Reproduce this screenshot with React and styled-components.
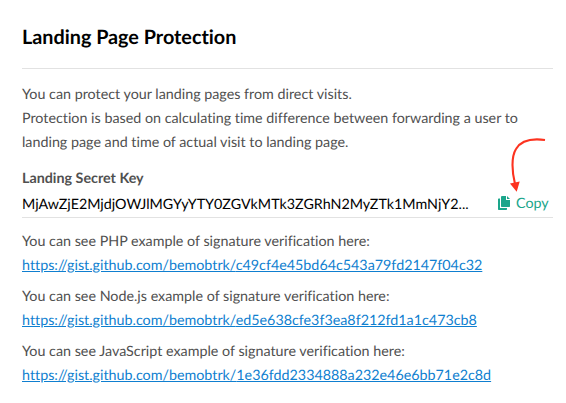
import React from 'react';
import styled, { createGlobalStyle } from 'styled-components';

const Global = createGlobalStyle`
  * { box-sizing: border-box; }
  body { margin: 0; background: #fff; font-family: Lato, "Liberation Sans", sans-serif; }
`;
const Panel = styled.main`
  width: 566px;
  height: 403px;
  padding: 22px 13px 0 22px;
  background: #fff;
  color: #505050;
  font-size: 14.3px;
  line-height: 24px;
  text-rendering: geometricPrecision;
  font-feature-settings: "liga" 0;
`;
const Title = styled.h1`
  margin: 0;
  height: 47px;
  border-bottom: 1px solid #e2e2e2;
  color: #000;
  font-size: 19.8px;
  font-weight: 700;
  line-height: 30px;
`;
const Intro = styled.p`
  margin: 14px 0 0;
  white-space: nowrap;
`;
const Label = styled.h2`
  margin: 12px 0 0;
  font-size: 14.3px;
  font-weight: 700;
  line-height: 24px;
`;
const KeyRow = styled.div`
  display: flex;
  justify-content: space-between;
  height: 27px;
  padding-right: 4px;
  border-bottom: 1px solid #e2e2e2;
`;
const Key = styled.span`
  color: #000;
  line-height: 28px;
  white-space: nowrap;
`;
const CopyButton = styled.button`
  position: relative;
  display: flex;
  align-items: flex-start;
  gap: 6px;
  width: 51px;
  height: 26px;
  padding: 0;
  border: 0;
  background: none;
  color: #1ba68b;
  font: inherit;
  line-height: 26px;
  text-rendering: inherit;
`;
const CopyIcon = styled.svg`
  flex: none;
  margin-top: 5px;
`;
const Arrow = styled.svg`
  position: absolute;
  left: 10px;
  top: -55px;
`;
const Example = styled.p`
  margin: ${(p) => (p.$first ? '12px' : '7px')} 0 0;
  white-space: nowrap;
`;
const Link = styled.a`
  display: block;
  width: max-content;
  color: #0f7fd0;
  text-decoration: underline;
`;

const examples = [
  ['PHP', 'c49cf4e45bd64c543a79fd2147f04c32'],
  ['Node.js', 'ed5e638cfe3f3ea8f212fd1a1c473cb8'],
  ['JavaScript', '1e36fdd2334888a232e46e6bb71e2c8d'],
];

export default function App() {
  return (
    <Panel>
      <Global />
      <Title>Landing Page Protection</Title>
      <Intro>
        You can protect your landing pages from direct visits.<br />
        Protection is based on calculating time difference between forwarding a user to<br />
        landing page and time of actual visit to landing page.
      </Intro>
      <Label>Landing Secret Key</Label>
      <KeyRow>
        <Key>MjAwZjE2MjdjOWJlMGYyYTY0ZGVkMTk3ZGRhN2MyZTk1MmNjY2...</Key>
        <CopyButton>
          <CopyIcon width="12" height="14" viewBox="0 0 12 14" fill="currentColor">
            <path d="M4 0h4v4h4v6.300q0 .7-.7.7H3.700Q3 11 3 10.300V1q0-1 1-1zM9 0l3 3H9zM.7 2.500H2V12h7v1.300q0 .7-.7.7H.7Q0 14 0 13.300V3.200q0-.7.7-.7z" />
          </CopyIcon>
          Copy
          <Arrow width="40" height="56" viewBox="508 136 40 56" fill="none">
            <path d="M545 140C530 138 521 140.500 516 149C511 157 512 172 515 184" stroke="#fc3320" strokeWidth="2.1" />
            <path d="M510 183.500l9.700-2-3 10.300z" fill="#fc3320" />
          </Arrow>
        </CopyButton>
      </KeyRow>
      {examples.map(([name, hash], i) => (
        <Example key={name} $first={i === 0}>
          You can see {name} example of signature verification here:
          <Link href={`https://gist.github.com/bemobtrk/${hash}`}>
            https://gist.github.com/bemobtrk/{hash}
          </Link>
        </Example>
      ))}
    </Panel>
  );
}
